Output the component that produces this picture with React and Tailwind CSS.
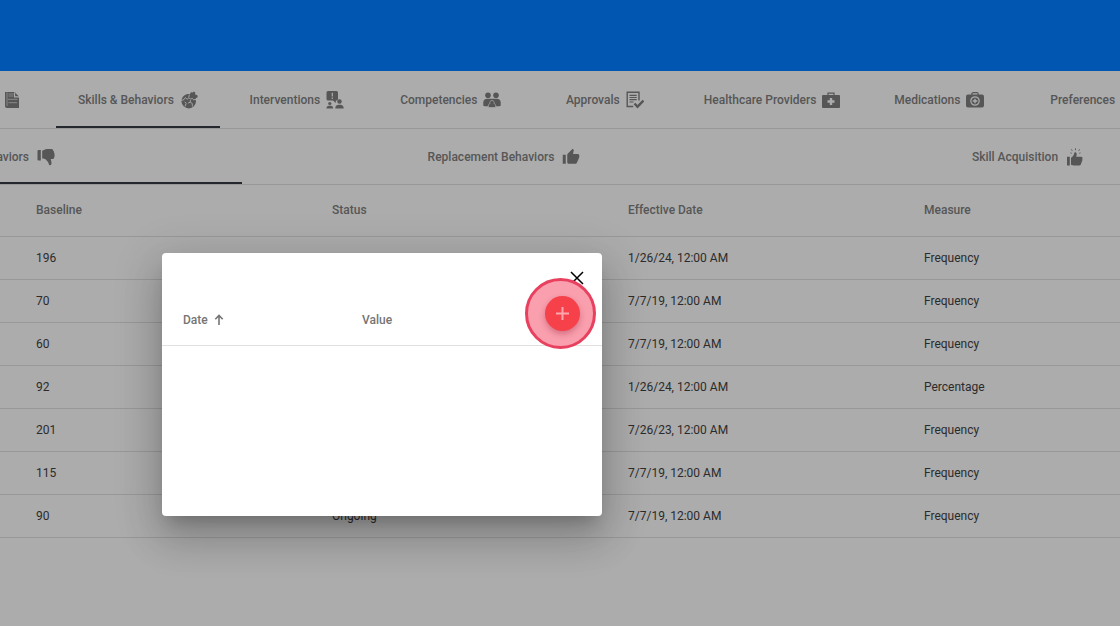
import { MdThumbUp } from 'react-icons/md'

function NotesIcon() {
  return (
    <svg viewBox="0 0 16 18" className="flex-none w-4 h-[18px]" fill="currentColor" aria-hidden="true">
      <path d="M1 1h9.5l4.5 4.5V17H3a2 2 0 0 1-2-2z" />
      <path d="M3 1.5V15M4.500 3h5M4.500 5h4.500M4 8.300h9.500M4.500 11.700h8.500" fill="none" stroke="#acacac" strokeWidth=".6" />
      <path d="M10.500 1.500v4.300H15" fill="none" stroke="#acacac" strokeWidth="1.200" />
    </svg>
  )
}

function SkillsIcon() {
  return (
    <svg viewBox="0 0 18 18" className="flex-none w-[18px] h-[18px]" fill="currentColor" aria-hidden="true">
      <path d="M7.500 2.900 10 3l1-1.700 1.700.3L14 .6l1.300 1.200-.2 1.700 2.300.8.300 2-1.700.8-.4 1.300.4 2A7.300 7.300 0 1 1 7.500 2.900z" />
      <path
        d="M1.200 9.500 4 8.600l1.300-2 1.800 1.600 1.500-.8M5 15.500l1.200-3.200-1.600-1.600M9.300 3.500l-.5 3 1.600 1.600 2-.7 1.200 1.400 3-.5M8 12.200l2.200-1 .2-2.200M10.200 11.200l2 1.200.2 3"
        fill="none"
        stroke="#acacac"
        strokeWidth=".9"
      />
    </svg>
  )
}

function InterventionsIcon() {
  return (
    <svg viewBox="0 0 18 18" className="flex-none w-[18px] h-[18px]" fill="currentColor" aria-hidden="true">
      <path d="M2 0h8.500A1.500 1.500 0 0 1 12 1.500V8a1.500 1.500 0 0 1-1.500 1.500H9.800V12L7 9.500H2A1.500 1.500 0 0 1 .5 8V1.500A1.500 1.500 0 0 1 2 0z" />
      <path d="M6.300 1.800v3.700M6.300 6.500V8" stroke="#acacac" strokeWidth="1.200" />
      <circle cx="3.800" cy="12.500" r="1.600" />
      <path d="M.5 17.500c0-2.200 1.300-2.700 3.300-2.700s3.300.5 3.300 2.700z" />
      <circle cx="13.500" cy="10.500" r="2.200" />
      <path d="M9.300 17.500c0-3 1.700-3.800 4.200-3.800s4.200.8 4.200 3.800z" />
    </svg>
  )
}

function CompetenciesIcon() {
  return (
    <svg viewBox="0 0 18 18" className="flex-none w-[18px] h-[18px]" fill="currentColor" aria-hidden="true">
      <circle cx="5" cy="4.200" r="2.800" />
      <circle cx="13" cy="4.200" r="2.800" />
      <path d="M.3 11.500C.3 9 2 7.800 4.300 7.800h9.400c2.300 0 4 1.200 4 3.700V14c0 .8-.5 1.200-1.200 1.200h-15C.8 15.200.3 14.800.3 14z" />
      <path d="M5.400 16.500v-2c0-1 .6-1.700 1.600-1.900a2.200 2.200 0 1 1 4 0c1 .2 1.600.9 1.600 1.900v2z" stroke="#acacac" strokeWidth=".7" />
    </svg>
  )
}

function ApprovalsIcon() {
  return (
    <svg viewBox="0 0 18 18" className="flex-none w-[18px] h-[18px]" fill="none" stroke="currentColor" aria-hidden="true">
      <path d="M13 9.500V1.200H1.200v14.300h6" strokeWidth="1.400" />
      <path d="M3.500 4.300h7.200M3.500 6.500h7.200M3.500 8.700h7.200M3.500 11h4" strokeWidth="1.200" />
      <path d="m8.500 12.500 3 3.200 6-6.200" strokeWidth="2.400" />
    </svg>
  )
}

function ProvidersIcon() {
  return (
    <svg viewBox="0 0 18 18" className="flex-none w-[18px] h-[18px]" aria-hidden="true">
      <path d="M6 4.500V2.200h6v2.300" fill="none" stroke="currentColor" strokeWidth="1.200" />
      <rect y="4" width="18" height="13" rx="1" fill="currentColor" />
      <path d="M9 7v7M5.500 10.500h7" stroke="#acacac" strokeWidth="2.400" />
    </svg>
  )
}

function MedicationsIcon() {
  return (
    <svg viewBox="0 0 18 18" className="flex-none w-[18px] h-[18px]" fill="none" stroke="currentColor" aria-hidden="true">
      <path d="M5.800 4V3a1.300 1.300 0 0 1 1.300-1.300h3.800A1.300 1.300 0 0 1 12.200 3v1" strokeWidth="1.200" />
      <rect y="3.500" width="18" height="13" rx="2" fill="currentColor" stroke="none" />
      <circle cx="9" cy="10" r="4.200" stroke="#acacac" strokeWidth="1.200" />
      <path d="M9 7.700v4.600M6.700 10h4.600" stroke="#acacac" strokeWidth="1.400" />
    </svg>
  )
}

function ThumbDownIcon() {
  return (
    <svg viewBox="0 0 18 18" className="flex-none w-[18px] h-[18px]" fill="currentColor" aria-hidden="true">
      <path d="M1.500 2h2.300v10.500H1.500a1 1 0 0 1-1-1V3a1 1 0 0 1 1-1z" />
      <path d="M5.200 2.800C7 2.300 8 1 10 1h4.500c1 0 1.500.7 1.600 1.500.8.500 1 1.300.8 2 .7.700.8 1.500.5 2.200.4.800.3 1.600-.2 2.200.2 1.300-.7 2.100-2 2.100h-1.400c.2 1.500.8 2.800.7 4.300 0 1.200-.6 2-1.500 2-.8 0-1.200-.6-1.300-1.500-.3-2-1.700-3-3-4.300-.8-.8-2-1-3.500-1z" />
    </svg>
  )
}

function AcquisitionIcon() {
  return (
    <svg viewBox="0 0 18 18" className="flex-none w-[18px] h-[18px]" fill="currentColor" aria-hidden="true">
      <path d="M1 8.800h2.800V17.500H1zM5 9.700c1.700-.8 3-2.500 3.300-4.900.1-1 2.400-.7 2.400 1.400 0 1-.3 1.800-.5 2.600h4.800c1.600 0 1.900 1.400 1.200 2.200.5.800.3 1.600-.3 2.100.2.800-.1 1.500-.7 1.900 0 1.300-.7 2.500-2 2.500H8.500c-1.500 0-2-.5-3.500-.8z" />
      <path d="M9.500.3v1.900M5.300 1.300l1 1.500M13.700 1.300l-1 1.500M4.500 4.900l1.300.4M14.500 4.900l-1.300.4" fill="none" stroke="currentColor" strokeWidth=".9" />
    </svg>
  )
}

const tabs = [
  { label: 'Skills & Behaviors', Icon: SkillsIcon, active: true },
  { label: 'Interventions', Icon: InterventionsIcon },
  { label: 'Competencies', Icon: CompetenciesIcon },
  { label: 'Approvals', Icon: ApprovalsIcon },
  { label: 'Healthcare Providers', Icon: ProvidersIcon },
  { label: 'Medications', Icon: MedicationsIcon },
]

const rows = [
  ['196', 'Ongoing', '1/26/24, 12:00 AM', 'Frequency'],
  ['70', 'Ongoing', '7/7/19, 12:00 AM', 'Frequency'],
  ['60', 'Ongoing', '7/7/19, 12:00 AM', 'Frequency'],
  ['92', 'Ongoing', '1/26/24, 12:00 AM', 'Percentage'],
  ['201', 'Ongoing', '7/26/23, 12:00 AM', 'Frequency'],
  ['115', 'Ongoing', '7/7/19, 12:00 AM', 'Frequency'],
  ['90', 'Ongoing', '7/7/19, 12:00 AM', 'Frequency'],
]

function BaselineDialog() {
  return (
    <div
      role="dialog"
      aria-label="Baseline history"
      className="absolute left-[162px] top-[253px] w-[440px] h-[263px] bg-white rounded-[4px] shadow-[0_11px_15px_-7px_rgba(0,0,0,0.2),0_24px_38px_3px_rgba(0,0,0,0.14),0_9px_46px_8px_rgba(0,0,0,0.12)]"
    >
      <div className="flex justify-end h-[42px] pt-[17px] pr-[17px]">
        <button type="button" aria-label="Close" className="w-4 h-4 text-black">
          <svg viewBox="0 0 16 16" className="w-4 h-4" fill="none" stroke="currentColor" strokeWidth="1.5">
            <path d="m2 2 12 12M14 2 2 14" />
          </svg>
        </button>
      </div>
      <table className="w-full table-fixed text-left text-xs text-[#757575]">
        <thead>
          <tr className="h-[50px] border-b border-[#e0e0e0]">
            <th className="w-[200px] pl-[21px] font-medium">
              <button type="button" className="flex items-center gap-1.5">
                Date
                <svg viewBox="0 0 10 12" className="w-[10px] h-3" fill="none" stroke="currentColor" strokeWidth="1.6">
                  <path d="M5 11V2M1.300 5.200 5 1.500l3.700 3.700" />
                </svg>
              </button>
            </th>
            <th className="font-medium">Value</th>
          </tr>
        </thead>
      </table>

      {/* Add button with its highlight ring */}
      <div className="absolute left-[383px] top-[43px] w-[35px] h-[35px]">
        <button
          type="button"
          aria-label="Add baseline"
          className="relative z-10 flex items-center justify-center w-[35px] h-[35px] rounded-full bg-[#f6404a] text-[#fba5ad] shadow-[0_3px_6px_rgba(120,0,30,0.3)]"
        >
          <svg viewBox="0 0 13 13" className="w-[13px] h-[13px]" fill="none" stroke="currentColor" strokeWidth="2">
            <path d="M6.500 0v13M0 6.500h13" />
          </svg>
        </button>
        <span className="absolute -left-5 -top-[18px] w-[71px] h-[71px] rounded-full border-[3px] border-[#e8415f] bg-[#fa9fae]" />
      </div>
    </div>
  )
}

export default function App() {
  return (
    <div className="relative min-h-screen overflow-hidden bg-[#acacac] font-['Roboto',sans-serif] text-xs">
      <header className="h-[71px] bg-[#0056b1]" />

      {/* Section tabs */}
      <nav className="flex h-[58px] overflow-hidden border-b border-[#989898] font-medium text-[#565656]">
        <button type="button" aria-label="Notes" className="flex flex-none items-center justify-end w-14 pr-9">
          <NotesIcon />
        </button>
        {tabs.map(({ label, Icon, active }) => (
          <button
            key={label}
            type="button"
            className={`flex flex-none items-center justify-center gap-1.5 min-w-[154px] px-[22px] pt-0.5 whitespace-nowrap border-b-2 ${active ? 'border-[#25272e]' : 'border-transparent'}`}
          >
            {label}
            <Icon />
          </button>
        ))}
        <button type="button" className="flex-none pl-[34px] pt-0.5 border-b-2 border-transparent">Preferences</button>
      </nav>

      {/* Behavior tabs */}
      <nav className="flex h-14 overflow-hidden border-b border-[#989898] font-medium text-[#565656]">
        <button type="button" className="flex flex-none items-center justify-end gap-2 w-[242px] pr-[187px] pt-0.5 border-b-2 border-[#25272e]">
          Behaviors
          <ThumbDownIcon />
        </button>
        <button type="button" className="flex flex-none items-center justify-center gap-2 w-[524px] pt-0.5 border-b-2 border-transparent">
          Replacement Behaviors
          <MdThumbUp className="flex-none w-[18px] h-[18px]" />
        </button>
        <button type="button" className="flex flex-none items-center justify-center gap-2 w-[524px] pt-0.5 border-b-2 border-transparent">
          Skill Acquisition
          <AcquisitionIcon />
        </button>
      </nav>

      <table className="w-full table-fixed text-left text-[#2b2b2b]">
        <thead>
          <tr className="h-[51px] border-b border-[#989898] text-[#565656]">
            <th className="w-[332px] pl-9 font-medium">Baseline</th>
            <th className="w-[296px] font-medium">Status</th>
            <th className="w-[296px] font-medium">Effective Date</th>
            <th className="font-medium">Measure</th>
          </tr>
        </thead>
        <tbody>
          {rows.map(([baseline, status, date, measure], i) => (
            <tr key={i} className="h-[43px] border-b border-[#989898]">
              <td className="pl-9">{baseline}</td>
              <td>{status}</td>
              <td>{date}</td>
              <td>{measure}</td>
            </tr>
          ))}
        </tbody>
      </table>

      <BaselineDialog />
    </div>
  )
}
